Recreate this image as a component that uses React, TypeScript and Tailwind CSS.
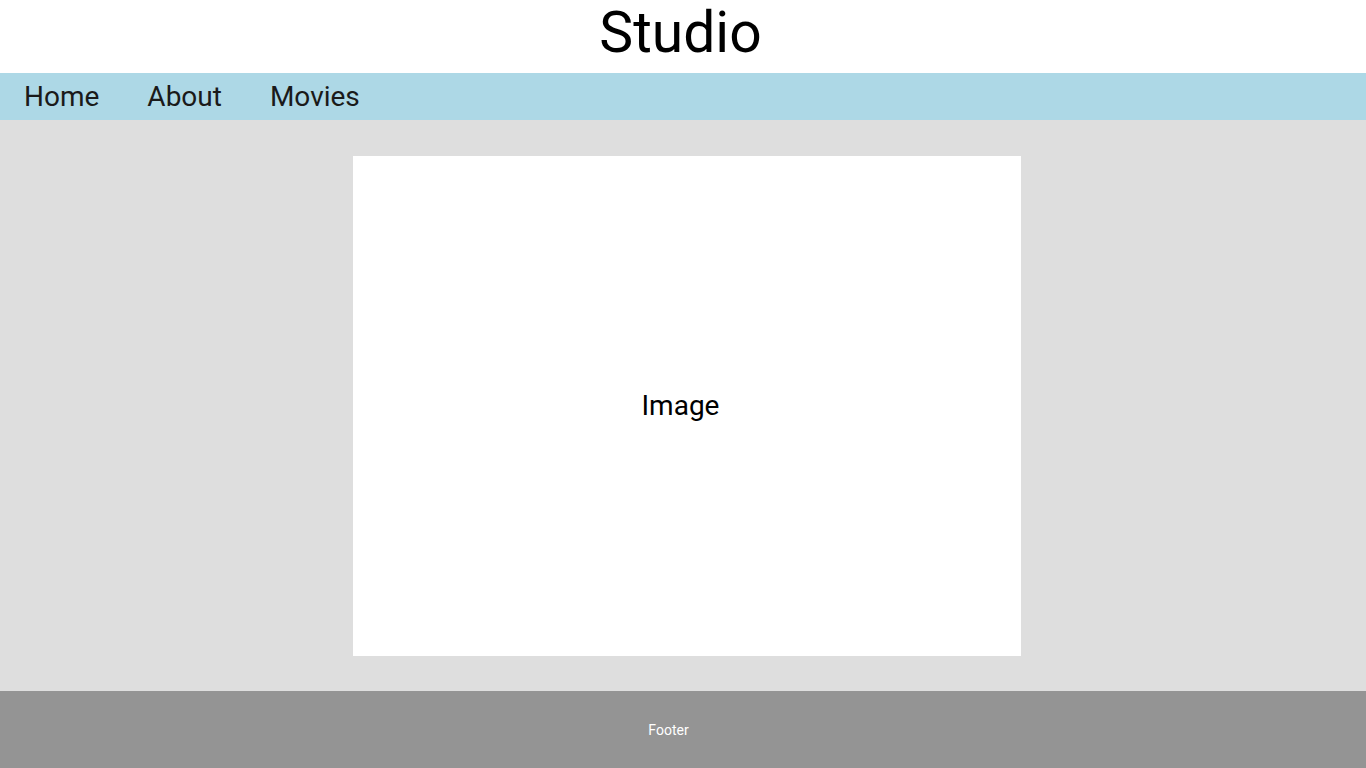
export default function App() {
  return (
    <div className="flex min-h-[768px] flex-col bg-white" style={{ fontFamily: "Roboto, 'Noto Sans', sans-serif" }}>
      <header className="flex h-[73px] items-center justify-center bg-white pb-[9px]">
        <h1 className="pr-[5px] text-[57px] leading-none text-black">Studio</h1>
      </header>
      <nav className="flex h-[47px] items-center bg-[#add8e6]">
        <a className="px-6 text-[28px] leading-none text-[#1a1a1a]">Home</a>
        <a className="px-6 text-[28px] leading-none text-[#1a1a1a]">About</a>
        <a className="px-6 text-[28px] leading-none text-[#1a1a1a]">Movies</a>
      </nav>
      <main className="flex h-[571px] items-center justify-center bg-[#dedede]">
        <div className="ml-[8px] flex h-[500px] w-[668px] items-center justify-center bg-white pr-[13px]">
          <span className="text-[28px] text-black">Image</span>
        </div>
      </main>
      <footer className="flex h-[77px] items-center justify-center bg-[#949494] pr-[29px]">
        <span className="pt-[2px] text-[14px] text-white">Footer</span>
      </footer>
    </div>
  );
}
